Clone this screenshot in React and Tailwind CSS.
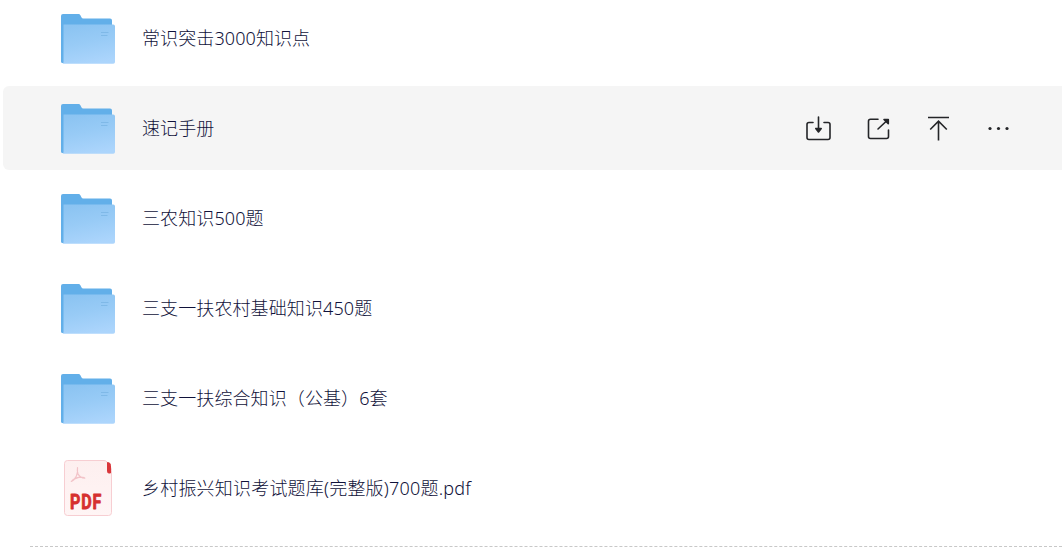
import React from 'react';

const files = [
  { id: 1, name: '常识突击3000知识点', type: 'folder' },
  { id: 2, name: '速记手册', type: 'folder', active: true },
  { id: 3, name: '三农知识500题', type: 'folder' },
  { id: 4, name: '三支一扶农村基础知识450题', type: 'folder' },
  { id: 5, name: '三支一扶综合知识（公基）6套', type: 'folder' },
  { id: 6, name: '乡村振兴知识考试题库(完整版)700题.pdf', type: 'pdf' },
];

const FolderIcon = () => (
  <svg width="60" height="60" viewBox="0 0 60 60" fill="none">
    <defs>
      <linearGradient id="folderFront" x1="26" y1="16" x2="34" y2="56" gradientUnits="userSpaceOnUse">
        <stop stopColor="#8cc4f2" />
        <stop offset="0.45" stopColor="#98cbf6" />
        <stop offset="1" stopColor="#acd5fc" />
      </linearGradient>
    </defs>
    <path d="M3 8a2 2 0 0 1 2-2h15.500q1.300 0 1.900 1.200l1 2q.6 1.200 1.900 1.200H52a2 2 0 0 1 2 2V55H4.500A1.500 1.500 0 0 1 3 53.500Z" fill="#62afe9" />
    <path d="M5.500 16.500H55.200a1.800 1.800 0 0 1 1.800 1.800V54a1.800 1.800 0 0 1-1.800 1.800H4.500q1-.3 1-2Z" fill="url(#folderFront)" />
    <path d="M43 24.500h7.500M43 27.500h6.500" stroke="#7db7e7" strokeWidth="0.900" />
  </svg>
);

const PdfIcon = () => (
  <svg width="60" height="60" viewBox="0 0 60 60" fill="none">
    <defs>
      <linearGradient id="pdfPage" x1="30" y1="2" x2="30" y2="58" gradientUnits="userSpaceOnUse">
        <stop stopColor="#fdefef" />
        <stop offset="1" stopColor="#fff5f5" />
      </linearGradient>
    </defs>
    <path d="M9.500 2.500H46q2 0 3 1.500l3.500 5q1 1.500 1 3.500v42a3 3 0 0 1-3 3h-41a3 3 0 0 1-3-3v-49a3 3 0 0 1 3-3Z" fill="url(#pdfPage)" stroke="#f7ced2" />
    <path d="M49.500 4.500a3 3 0 0 1 3 3V15h-1.500a1.500 1.500 0 0 1-1.500-1.500Z" fill="#d9363a" stroke="#d9363a" strokeLinejoin="round" />
    <path d="M19.500 9.500c.4 4.500 0 6.500-1.200 8.700-1.300 2.400-3 4.600-5 5.300 2-2.500 4.700-3.700 7.500-4.200 2.400-.4 4.600-.2 6 .8-3.200-.2-5.400-1.700-6.700-4-.9-1.800-1-4-.6-6.600Z" stroke="#f2c3c8" strokeWidth="1.200" strokeLinejoin="round" />
    <text x="12" y="50.700" textLength="32" lengthAdjust="spacingAndGlyphs" letterSpacing="1" fill="#d6302f" stroke="#d6302f" strokeWidth="0.800" strokeLinejoin="round" fontFamily="Roboto, sans-serif" fontSize="20.500" fontWeight="700">PDF</text>
  </svg>
);

const DownloadIcon = () => (
  <svg width="28" height="28" viewBox="0 0 28 28" fill="none" stroke="#242528" strokeWidth="1.600" strokeLinecap="round" strokeLinejoin="round">
    <path d="M9 8.500H5a2 2 0 0 0-2 2V23.500a2 2 0 0 0 2 2h19a2 2 0 0 0 2-2V10.500a2 2 0 0 0-2-2h-4M14.500 3v11" />
    <path d="M11.800 14.500h5.400l-2.700 3.500Z" fill="#242528" />
  </svg>
);

const ShareIcon = () => (
  <svg width="28" height="28" viewBox="0 0 28 28" fill="none" stroke="#242528" strokeWidth="1.600" strokeLinecap="round" strokeLinejoin="round">
    <path d="M14 5.200H6.500a2 2 0 0 0-2 2v15.300a2 2 0 0 0 2 2h16a2 2 0 0 0 2-2V16M14 15l8-7.500" />
    <path d="M20 5.500h4.300v4.300Z" fill="#242528" />
  </svg>
);

const TopIcon = () => (
  <svg width="28" height="28" viewBox="0 0 28 28" fill="none" stroke="#242528" strokeWidth="1.600">
    <path d="M4 3.500h21M14.500 26.500V7.500M6.200 15.500l8.300-8.300 8.300 8.300" />
  </svg>
);

const MoreIcon = () => (
  <svg width="28" height="28" viewBox="0 0 28 28" fill="#242528">
    <circle cx="6" cy="14.500" r="1.600" />
    <circle cx="14.500" cy="14.500" r="1.600" />
    <circle cx="23" cy="14.500" r="1.600" />
  </svg>
);

const FileRow = ({ file }) => (
  <li className={`flex h-[84px] items-center rounded-l-md pl-[55px] pr-[50px] ${file.active ? 'bg-[#f5f5f5]' : ''}`}>
    {file.type === 'pdf' ? <PdfIcon /> : <FolderIcon />}
    <span className={`ml-6 flex-1 whitespace-nowrap text-[18px] leading-6 text-[#10123a] ${file.type === 'pdf' ? 'tracking-[0.2px]' : 'tracking-[0.1px]'}`}>
      {file.name}
    </span>
    {file.active && (
      <div className="flex items-center gap-8">
        <button aria-label="下载"><DownloadIcon /></button>
        <button aria-label="分享"><ShareIcon /></button>
        <button aria-label="置顶"><TopIcon /></button>
        <button aria-label="更多"><MoreIcon /></button>
      </div>
    )}
  </li>
);

const App = () => {
  return (
    <div className="h-[548px] w-full overflow-hidden bg-white font-['Noto_Sans','Noto_Sans_CJK_SC',sans-serif] font-light">
      <ul className="-mt-1 flex flex-col gap-1.5 pl-[3px]">
        {files.map((file) => (
          <FileRow key={file.id} file={file} />
        ))}
      </ul>
      {/* Divider under the list */}
      <div className="ml-[30px] mt-4 border-t border-dashed border-[#c8c8c8]" />
    </div>
  );
};

export default App;
